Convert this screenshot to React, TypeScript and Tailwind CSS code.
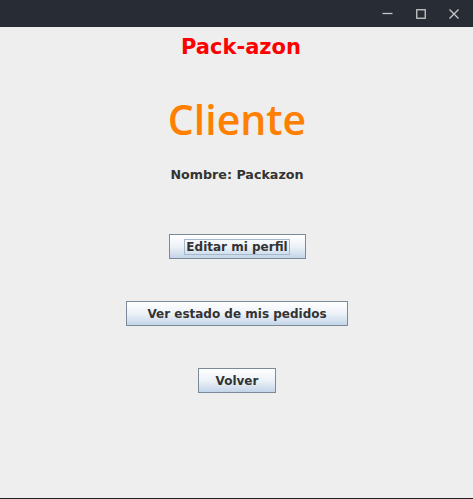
const font = { fontFamily: '"DejaVu Sans", sans-serif' };

function SwingButton({ label, width, focused }: { label: string; width: string; focused?: boolean }) {
  return (
    <button
      className={`${width} h-[25px] flex items-center justify-center border border-[#7a8a99] bg-gradient-to-b from-[#ffffff] via-[#edf2f8] to-[#c3d5e8] text-[12px] font-bold text-[#333333]`}
      style={font}
    >
      <span className={focused ? 'px-[1px] leading-[14px] border border-[#a3b8cc]' : 'leading-[14px] border border-transparent'}>
        {label}
      </span>
    </button>
  );
}

function TitleButton({ children }: { children: React.ReactNode }) {
  return <div className="w-[33px] h-[27px] flex items-center justify-center">{children}</div>;
}

export default function App() {
  return (
    <div className="w-[473px] h-[499px] flex flex-col bg-[#eeeeee] border-b border-[#1e1e1e]" style={font}>
      <div className="h-[27px] bg-[#282c34] flex items-center justify-end pr-[3px]">
        <TitleButton>
          <svg width="11" height="11" viewBox="0 0 11 11">
            <path d="M0.5 5.5H10.5" stroke="#c8c8c8" strokeWidth="1.3" />
          </svg>
        </TitleButton>
        <TitleButton>
          <svg width="10" height="10" viewBox="0 0 10 10">
            <rect x="0.75" y="0.75" width="8.5" height="8.5" fill="none" stroke="#c8c8c8" strokeWidth="1.3" />
          </svg>
        </TitleButton>
        <TitleButton>
          <svg width="10" height="10" viewBox="0 0 10 10">
            <path d="M0.5 0.5L9.5 9.5M9.5 0.5L0.5 9.5" stroke="#c8c8c8" strokeWidth="1.3" />
          </svg>
        </TitleButton>
      </div>
      <div className="flex-1 flex flex-col items-center pl-[1px]">
        <h1 className="mt-[5px] ml-[8px] text-[21px] leading-[30px] font-bold text-[#ff0000]">Pack-azon</h1>
        <h2
          className="mt-[33px] text-[41px] leading-[48px] font-semibold text-[#ff8000]"
          style={{ fontFamily: '"Open Sans", sans-serif' }}
        >
          Cliente
        </h2>
        <p className="mt-[23px] text-[12.7px] leading-[18px] font-bold text-[#333333]">Nombre: Packazon</p>
        <div className="mt-[50px] flex flex-col items-center gap-[42px]">
          <SwingButton label="Editar mi perfil" width="w-[137px]" focused />
          <SwingButton label="Ver estado de mis pedidos" width="w-[222px]" />
          <SwingButton label="Volver" width="w-[78px]" />
        </div>
      </div>
    </div>
  );
}
